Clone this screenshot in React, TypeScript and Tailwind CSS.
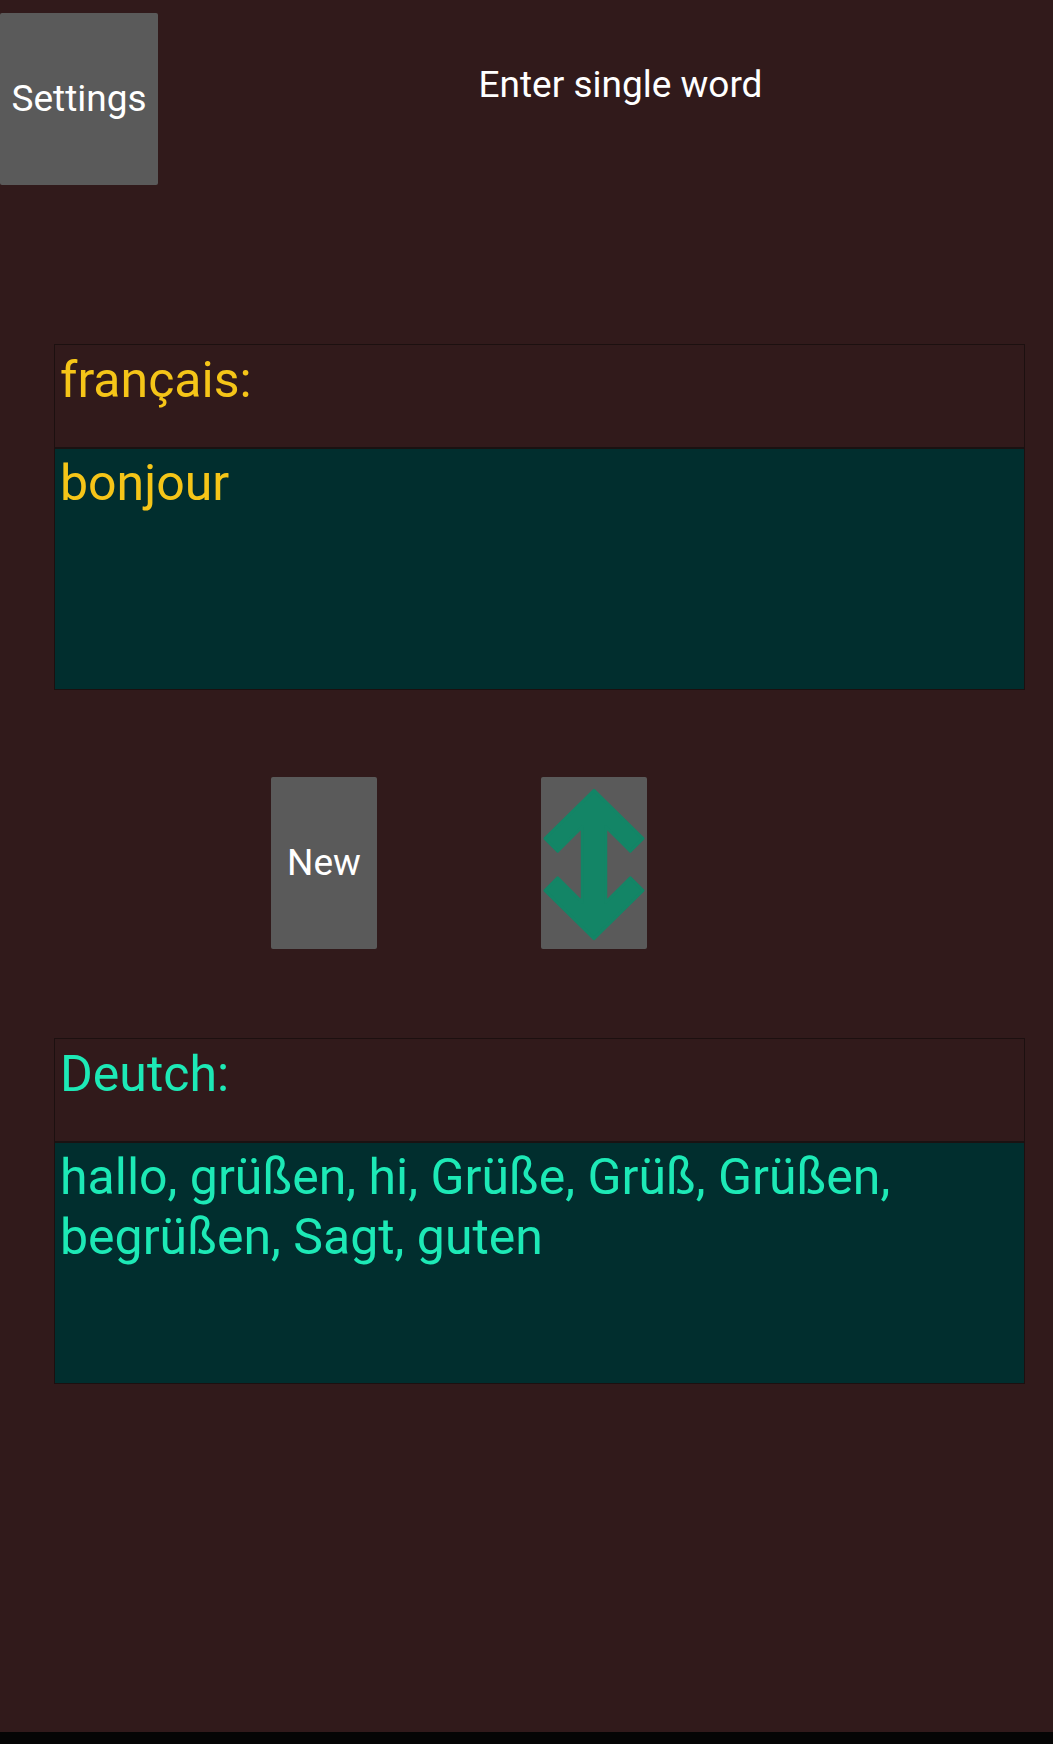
import React from "react";

function SwapIcon() {
  return (
    <svg width="108" height="172" viewBox="0 0 108 172" className="block">
      <polygon
        points="54,12 104,61 91,74 66,49 66,126 91,101 104,114 54,163 4,114 17,101 42,126 42,49 17,74 4,61"
        fill="#138566"
        stroke="#138566"
        strokeWidth="3"
        strokeLinejoin="round"
      />
    </svg>
  );
}

function WordPanel({
  label,
  text,
  color,
}: {
  label: string;
  text: string;
  color: string;
}) {
  return (
    <div className="ml-[54px] w-[971px] border border-[#1c1010]">
      <div
        className={`h-[102px] px-[5px] pt-[5px] text-[50px] leading-[60px] ${color}`}
      >
        {label}
      </div>
      <div
        className={`h-[242px] border-t-2 border-[#1a1212] bg-[#012e2e] px-[5px] pt-[4px] text-[50px] leading-[60px] ${color}`}
      >
        {text}
      </div>
    </div>
  );
}

export default function App() {
  return (
    <div className="flex min-h-[1744px] w-[1053px] flex-col bg-[#311a1b] font-['Roboto',_'Noto_Sans',_sans-serif]">
      <div className="h-[1732px]">
        {/* Header */}
        <div className="flex pt-[13px]">
          <button className="flex h-[172px] w-[158px] items-center justify-center rounded-[2px] bg-[#5a5a5a] text-[37px] text-white">
            Settings
          </button>
          <div className="flex-1 pl-[30px] pt-[44px] text-center text-[37px] text-white">
            Enter single word
          </div>
        </div>

        <div className="mt-[159px]">
          <WordPanel
            label="français:"
            text="bonjour"
            color="text-[#f5c518]"
          />
        </div>

        {/* Action buttons */}
        <div className="mt-[87px] flex">
          <button className="ml-[271px] flex h-[172px] w-[106px] items-center justify-center rounded-[2px] bg-[#5a5a5a] text-[37px] text-white">
            New
          </button>
          <button className="ml-[164px] flex h-[172px] w-[106px] items-center justify-center overflow-hidden rounded-[2px] bg-[#5a5a5a]">
            <SwapIcon />
          </button>
        </div>

        <div className="mt-[89px]">
          <WordPanel
            label="Deutch:"
            text="hallo, grüßen, hi, Grüße, Grüß, Grüßen, begrüßen, Sagt, guten"
            color="text-[#1de9b6]"
          />
        </div>
      </div>
      <div className="h-[12px] bg-[#050505]" />
    </div>
  );
}
